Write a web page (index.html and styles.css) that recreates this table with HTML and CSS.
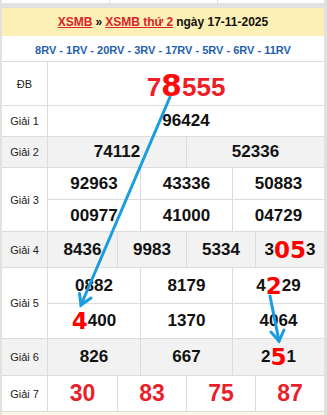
FILE: index.html
```html
<!DOCTYPE html>
<html lang="vi">
<head>
<meta charset="utf-8">
<link rel="stylesheet" href="styles.css">
</head>
<body>
<div class="page">
  <div class="prev"><div></div><div></div><div></div></div>
  <div class="box">
    <div class="title"><a href="#">XSMB</a> » <a href="#">XSMB thứ 2</a> ngày 17-11-2025</div>
    <div class="codes">8RV - 1RV - 20RV - 3RV - 17RV - 5RV - 6RV - 11RV</div>
    <div class="row db">
      <div class="lbl">ĐB</div>
      <div class="cells c1"><div class="cell"><span class="dbn">7<span class="hl8">8</span>555</span></div></div>
    </div>
    <div class="row g1">
      <div class="lbl">Giải 1</div>
      <div class="cells c1"><div class="cell n">96424</div></div>
    </div>
    <div class="row g2 alt">
      <div class="lbl">Giải 2</div>
      <div class="cells c2"><div class="cell n">74112</div><div class="cell n">52336</div></div>
    </div>
    <div class="row g3">
      <div class="lbl">Giải 3</div>
      <div class="cells c3 two">
        <div class="cell n">92963</div><div class="cell n">43336</div><div class="cell n">50883</div>
        <div class="cell n">00977</div><div class="cell n">41000</div><div class="cell n">04729</div>
      </div>
    </div>
    <div class="row g4 alt">
      <div class="lbl">Giải 4</div>
      <div class="cells c4">
        <div class="cell n">8436</div><div class="cell n">9983</div><div class="cell n">5334</div>
        <div class="cell n">3<span class="hl">05</span>3</div>
      </div>
    </div>
    <div class="row g5">
      <div class="lbl">Giải 5</div>
      <div class="cells c3 two">
        <div class="cell n">0882</div><div class="cell n">8179</div><div class="cell n">4<span class="hl">2</span>29</div>
        <div class="cell n"><span class="hl">4</span>400</div><div class="cell n">1370</div><div class="cell n">4064</div>
      </div>
    </div>
    <div class="row g6 alt">
      <div class="lbl">Giải 6</div>
      <div class="cells c3">
        <div class="cell n">826</div><div class="cell n">667</div><div class="cell n">2<span class="hl">5</span>1</div>
      </div>
    </div>
    <div class="row g7">
      <div class="lbl">Giải 7</div>
      <div class="cells c4">
        <div class="cell r">30</div><div class="cell r">83</div><div class="cell r">75</div><div class="cell r">87</div>
      </div>
    </div>
    <div class="next"></div>
  </div>
  <svg class="arrows" width="327" height="415" viewBox="0 0 327 415">
    <g stroke="#1a9de0" stroke-width="3" stroke-linecap="round" fill="none">
      <line x1="170" y1="97" x2="81" y2="305"/>
      <polyline points="79.5,293.5 81,305 91,298"/>
      <line x1="270" y1="296" x2="279" y2="341"/>
      <polyline points="271,332 279,341 284,330"/>
    </g>
  </svg>
</div>
</body>
</html>
```
FILE: styles.css
```css
* { box-sizing: border-box; }
html, body { margin: 0; padding: 0; }
body {
  background: #e1e1e1;
  font-family: "Liberation Sans", Arial, sans-serif;
  color: #111;
}
.page {
  position: relative;
  width: 327px;
  height: 415px;
  overflow: hidden;
}
.prev {
  margin-left: 2px;
  width: 322px;
  height: 3px;
  background: #fff;
  display: grid;
  grid-template-columns: repeat(3, 1fr);
}
.prev div + div { border-left: 1px solid #dcdcdc; }
.box {
  margin: 5px 0 0 2px;
  width: 322px;
  background: #fff;
}
.title {
  height: 28px;
  background: #fcf0b6;
  display: flex;
  align-items: center;
  justify-content: center;
  font-weight: bold;
  font-size: 12px;
  color: #111;
  white-space: nowrap;
}
.title a {
  color: #d8232a;
  text-decoration: underline;
  margin: 0 3px;
}
.title a:first-child { margin-left: 0; }
.codes {
  height: 26px;
  border-bottom: 1px solid #dcdcdc;
  display: flex;
  align-items: center;
  justify-content: center;
  padding-top: 2px;
  font-weight: bold;
  font-size: 11px;
  color: #1f5fae;
  white-space: nowrap;
}
.row {
  display: flex;
  border-bottom: 1px solid #dcdcdc;
  background: #fff;
}
.row.alt { background: #f2f2f2; }
.lbl {
  width: 46px;
  flex: none;
  border-right: 1px solid #dcdcdc;
  display: flex;
  align-items: center;
  justify-content: center;
  font-size: 11px;
  color: #222;
}
.cells {
  flex: 1;
  display: grid;
}
.c1 { grid-template-columns: 1fr; }
.c2 { grid-template-columns: 1fr 1fr; }
.c3 { grid-template-columns: 1fr 1fr 1fr; }
.c4 { grid-template-columns: 1fr 1fr 1fr 1fr; }
.c2 .cell:nth-child(2n) { border-left: 1px solid #dcdcdc; }
.c3 .cell:not(:nth-child(3n+1)) { border-left: 1px solid #dcdcdc; }
.c4 .cell:not(:nth-child(4n+1)) { border-left: 1px solid #dcdcdc; }
.two .cell:nth-child(-n+3) { border-bottom: 1px solid #dcdcdc; }
.cell {
  display: flex;
  align-items: center;
  justify-content: center;
  white-space: nowrap;
}
.db { height: 44px; }
.g1 { height: 31px; }
.g2 { height: 31px; }
.g3 { height: 64px; }
.g3 .cells { grid-template-rows: 32px 31px; }
.g4 { height: 36px; }
.g5 { height: 71px; }
.g5 .cells { grid-template-rows: 36px 34px; }
.g6 { height: 37px; }
.g7 { height: 36px; }
.n {
  font-weight: bold;
  font-size: 17px;
  color: #111;
}
.hl {
  font-family: "DejaVu Sans", Verdana, sans-serif;
  font-weight: bold;
  font-size: 23px;
  color: #ff0000;
}
.dbn {
  font-weight: bold;
  font-size: 26px;
  color: #ee1d26;
  line-height: 1;
  padding-top: 4px;
}
.hl8 {
  font-family: "DejaVu Sans", Verdana, sans-serif;
  font-size: 30px;
  color: #ff0a0a;
}
.r {
  font-weight: bold;
  font-size: 23px;
  color: #ea1f2b;
}
.next {
  height: 10px;
  background: #fdf8e6;
}
.arrows {
  position: absolute;
  top: 0;
  left: 0;
  pointer-events: none;
}
```
